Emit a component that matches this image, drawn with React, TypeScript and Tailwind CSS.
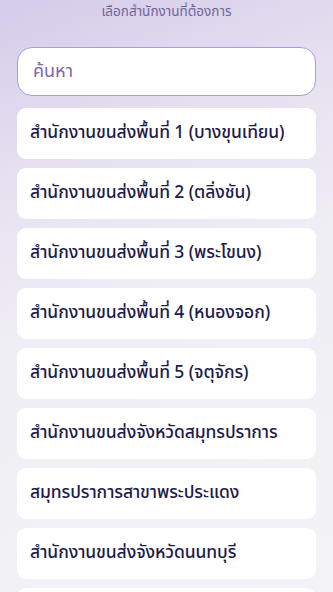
import React from "react";

const items = [
  "สำนักงานขนส่งพื้นที่ 1 (บางขุนเทียน)",
  "สำนักงานขนส่งพื้นที่ 2 (ตลิ่งชัน)",
  "สำนักงานขนส่งพื้นที่ 3 (พระโขนง)",
  "สำนักงานขนส่งพื้นที่ 4 (หนองจอก)",
  "สำนักงานขนส่งพื้นที่ 5 (จตุจักร)",
  "สำนักงานขนส่งจังหวัดสมุทรปราการ",
  "สมุทรปราการสาขาพระประแดง",
  "สำนักงานขนส่งจังหวัดนนทบุรี",
];

export default function App() {
  return (
    <div
      className="h-[592px] w-[333px] overflow-hidden bg-[linear-gradient(160deg,#d5cbea_0%,#e6e0f0_25%,#f0eef5_50%,#f3f3f6_100%)]"
      style={{ fontFamily: '"Noto Sans Thai", "Noto Sans", "Liberation Sans", sans-serif' }}
    >
      <div className="pt-[2px] text-center text-[13.5px] leading-[20px] text-[#6f6596]">
        เลือกสำนักงานที่ต้องการ
      </div>
      <div className="mt-[25px] px-[17px]">
        <div className="flex h-[49px] items-center rounded-[15px] border border-[#aa9dd4] bg-white px-[15px] text-[18px] text-[#7b6aa8]">
          ค้นหา
        </div>
        <div className="mt-[12px] flex flex-col gap-[9px]">
          {items.map((t) => (
            <div
              key={t}
              className="flex h-[51px] items-center whitespace-nowrap rounded-[9px] bg-white px-[13px] text-[17.5px] font-medium tracking-[-0.1px] text-[#1d1b4a]"
            >
              {t}
            </div>
          ))}
          <div className="h-[51px] rounded-[9px] bg-white" />
        </div>
      </div>
    </div>
  );
}
